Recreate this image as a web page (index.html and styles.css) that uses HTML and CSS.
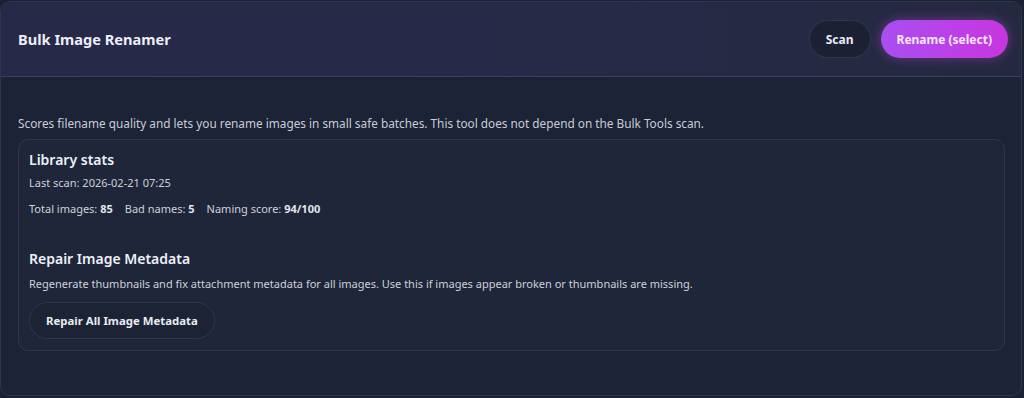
FILE: index.html
```html
<!doctype html>
<html lang="en">
<head>
    <meta charset="UTF-8">
    <meta name="viewport" content="width=device-width, initial-scale=1.0">
    <title>Bulk Image Renamer</title>
    <link rel="stylesheet" href="styles.css">
</head>
<body>
    <main class="panel">
        <header class="panel-head">
            <h1>Bulk Image Renamer</h1>
            <div class="actions">
                <button class="btn">Scan</button>
                <button class="btn btn-primary">Rename (select)</button>
            </div>
        </header>

        <section class="panel-body">
            <p class="intro">Scores filename quality and lets you rename images in small safe batches. This tool does not depend on the Bulk Tools scan.</p>

            <div class="box">
                <h2>Library stats</h2>
                <p class="meta">Last scan: 2026-02-21 07:25</p>
                <p class="meta stats">
                    <span>Total images: <b>85</b></span>
                    <span>Bad names: <b>5</b></span>
                    <span>Naming score: <b>94/100</b></span>
                </p>

                <h2 class="repair-title">Repair Image Metadata</h2>
                <p class="meta">Regenerate thumbnails and fix attachment metadata for all images. Use this if images appear broken or thumbnails are missing.</p>
                <button class="btn btn-repair">Repair All Image Metadata</button>
            </div>
        </section>
    </main>
</body>
</html>
```

FILE: styles.css
```css
* {
    margin: 0;
    padding: 0;
    box-sizing: border-box;
}

html,
body {
    height: 100%;
}

body {
    background: #1b2033;
    font-family: "Noto Sans", "Open Sans", sans-serif;
    color: #e6e8f2;
    padding: 1px 2px 2px 0;
}

.panel {
    height: 100%;
    border: 1px solid #2f3450;
    border-radius: 10px;
    background: #1d2336;
    overflow: hidden;
}

.panel-head {
    display: flex;
    align-items: center;
    justify-content: space-between;
    height: 75px;
    padding: 0 13px 0 17px;
    background: linear-gradient(90deg, #272949 0%, #262a47 60%, #25293f 100%);
    border-bottom: 1px solid #3a3f5d;
}

h1 {
    font-size: 14.6px;
    font-weight: 700;
    color: #eceef8;
}

.actions {
    display: flex;
    gap: 10px;
}

.btn {
    height: 38px;
    padding: 0 16px;
    border: 1px solid #30374c;
    border-radius: 19px;
    background: #1b2132;
    color: #e9ebf3;
    font: 700 12px "Noto Sans", "Open Sans", sans-serif;
    cursor: pointer;
}

.btn-primary {
    padding: 0 16px;
    border: none;
    background: linear-gradient(90deg, #a84ff0 0%, #bd3fe6 60%, #c736de 100%);
    color: #f7e6ff;
    box-shadow: 0 0 12px rgba(190, 70, 230, 0.45);
}

.panel-body {
    padding: 38px 16px 0 17px;
}

.intro {
    font-size: 11.8px;
    color: #c8ccd8;
    margin-bottom: 8px;
}

.box {
    border: 1px solid #2f3750;
    border-radius: 10px;
    background: #1f2639;
    padding: 10px 10px 11px;
}

h2 {
    font-size: 14px;
    font-weight: 600;
    color: #eef0f8;
    margin-bottom: 5px;
}

.meta {
    font-size: 11px;
    color: #cdd1dc;
    line-height: 18px;
    margin-bottom: 8px;
}

.meta b {
    font-weight: 700;
    color: #e2e5ee;
}

.stats {
    display: flex;
    gap: 12px;
}

.repair-title {
    margin-top: 31px;
    margin-bottom: 7px;
}

.btn-repair {
    height: 37px;
    padding: 0 16px;
    margin-top: 1px;
    background: #1c2334;
    font-size: 11.4px;
}
```
